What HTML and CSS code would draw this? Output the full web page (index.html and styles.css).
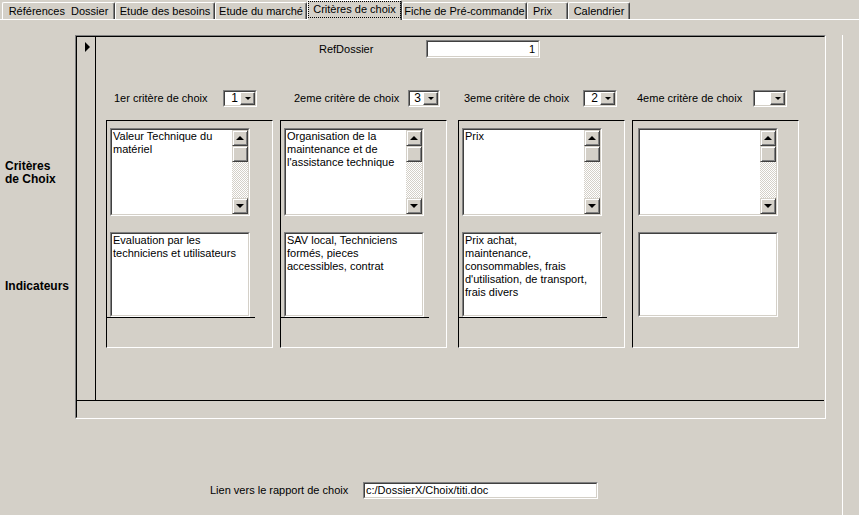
FILE: index.html
```html
<!DOCTYPE html>
<html lang="fr">
<head>
  <meta charset="UTF-8">
  <title>Critères de choix</title>
  <link rel="stylesheet" href="styles.css">
</head>
<body>

  <!-- onglets du formulaire -->
  <div class="tabs">
    <div class="tab t-ref">Références&nbsp; Dossier</div>
    <div class="tab t-besoins">Etude des besoins</div>
    <div class="tab t-marche">Etude du marché</div>
    <div class="tab tab-on t-crit"><span class="focus">Critères de choix</span></div>
    <div class="tab t-fiche">Fiche de Pré-commande</div>
    <div class="tab t-prix">Prix</div>
    <div class="tab t-cal">Calendrier</div>
  </div>

  <div class="page">
    <div class="main">
      <div class="side">
        <div class="side-crit">Critères<br>de Choix</div>
        <div class="side-ind">Indicateurs</div>
      </div>

      <!-- sous-formulaire des critères -->
      <div class="sf">
        <div class="sf-in">
          <div class="sf-detail">
            <div class="selector"><div class="rec-arrow"></div></div>
            <div class="detail">

              <div class="ref-row">
                <div class="ref-label">RefDossier</div>
                <div class="field ref-field"><div class="field-in num">1</div></div>
              </div>

              <div class="crit-row">
                <div class="crit c1">
                  <span>1er critère de choix</span>
                  <div class="combo"><div class="combo-in"><span class="val">1</span><span class="drop"><i></i></span></div></div>
                </div>
                <div class="crit c2">
                  <span>2eme critère de choix</span>
                  <div class="combo narrow"><div class="combo-in"><span class="val">3</span><span class="drop"><i></i></span></div></div>
                </div>
                <div class="crit c3">
                  <span>3eme critère de choix</span>
                  <div class="combo"><div class="combo-in"><span class="val">2</span><span class="drop"><i></i></span></div></div>
                </div>
                <div class="crit c4">
                  <span>4eme critère de choix</span>
                  <div class="combo"><div class="combo-in"><span class="val"></span><span class="drop"><i></i></span></div></div>
                </div>
              </div>

              <div class="panels">
                <div class="pnl p1">
                  <div class="field memo">
                    <div class="field-in memo-in">
                      <div class="txt">Valeur Technique du<br>matériel</div>
                      <div class="sb">
                        <div class="sb-btn up"><i></i></div>
                        <div class="sb-btn thumb"></div>
                        <div class="sb-track"></div>
                        <div class="sb-btn down"><i></i></div>
                      </div>
                    </div>
                  </div>
                  <div class="field memo2"><div class="field-in txt">Evaluation par les<br>techniciens et utilisateurs</div></div>
                  <div class="pnl-line"></div>
                </div>

                <div class="pnl p2">
                  <div class="field memo">
                    <div class="field-in memo-in">
                      <div class="txt">Organisation de la<br>maintenance et de<br>l'assistance technique</div>
                      <div class="sb">
                        <div class="sb-btn up"><i></i></div>
                        <div class="sb-btn thumb"></div>
                        <div class="sb-track"></div>
                        <div class="sb-btn down"><i></i></div>
                      </div>
                    </div>
                  </div>
                  <div class="field memo2"><div class="field-in txt">SAV local, Techniciens<br>formés, pieces<br>accessibles, contrat</div></div>
                  <div class="pnl-line"></div>
                </div>

                <div class="pnl p3">
                  <div class="field memo">
                    <div class="field-in memo-in">
                      <div class="txt">Prix</div>
                      <div class="sb">
                        <div class="sb-btn up"><i></i></div>
                        <div class="sb-btn thumb"></div>
                        <div class="sb-track"></div>
                        <div class="sb-btn down"><i></i></div>
                      </div>
                    </div>
                  </div>
                  <div class="field memo2"><div class="field-in txt">Prix achat,<br>maintenance,<br>consommables, frais<br>d'utilisation, de transport,<br>frais divers</div></div>
                  <div class="pnl-line"></div>
                </div>

                <div class="pnl p4">
                  <div class="field memo">
                    <div class="field-in memo-in">
                      <div class="txt"></div>
                      <div class="sb">
                        <div class="sb-btn up"><i></i></div>
                        <div class="sb-btn thumb"></div>
                        <div class="sb-track"></div>
                        <div class="sb-btn down"><i></i></div>
                      </div>
                    </div>
                  </div>
                  <div class="field memo2"><div class="field-in txt"></div></div>
                </div>
              </div>

            </div>
          </div>
          <div class="sf-foot"></div>
        </div>
      </div>
    </div>

    <div class="link-row">
      <div class="link-label">Lien vers le rapport de choix</div>
      <div class="field link-field"><div class="field-in">c:/DossierX/Choix/titi.doc</div></div>
    </div>
  </div>

</body>
</html>
```

FILE: styles.css
```css
* {
  box-sizing: border-box;
}

html, body {
  height: 100%;
}

body {
  margin: 0;
  background-color: #d4d0c8;
  color: #000;
  font-family: 'Liberation Sans', Arial, sans-serif;
  font-size: 11px;
  line-height: 13px;
  overflow: hidden;
}

/* onglets */
.tabs {
  display: flex;
  align-items: flex-start;
  height: 20px;
  border-bottom: 1px solid #fff;
  padding-left: 2px;
}

.tab {
  margin-top: 2px;
  height: 17px;
  padding-top: 2px;
  text-align: center;
  white-space: nowrap;
  border-left: 1px solid #fff;
  border-top: 1px solid #fff;
  border-right: 1px solid #404040;
  border-radius: 2px 2px 0 0;
  box-shadow: inset -1px 0 #808080;
}

.tab-on {
  margin-top: 0;
  height: 20px;
  margin-bottom: -1px;
  padding-top: 1px;
  background-color: #d4d0c8;
}

.focus {
  display: block;
  margin: 0 1px;
  padding: 1px 0;
  outline: 1px dotted #000;
}

.t-ref { width: 113px; }
.t-besoins { width: 100px; }
.t-marche { width: 92px; }
.t-crit { width: 95px; }
.t-fiche { width: 125px; }
.t-prix { width: 41px; text-align: left; padding-left: 5px; }
.t-cal { width: 62px; }

.page {
  width: 843px;
  height: calc(100% - 20px);
  border-right: 1px solid #fff;
}

.main {
  display: flex;
  margin-top: 15px;
}

.side {
  width: 75px;
  padding-left: 5px;
  font-size: 12px;
  font-weight: bold;
}

.side-crit {
  margin-top: 125px;
}

.side-ind {
  margin-top: 94px;
}

/* sous-formulaire */
.sf {
  width: 751px;
  height: 384px;
  border: 1px solid;
  border-color: #808080 #fff #fff #808080;
}

.sf-in {
  height: 100%;
  display: flex;
  flex-direction: column;
  border: 1px solid;
  border-color: #000 #d4d0c8 #d4d0c8 #000;
}

.sf-detail {
  display: flex;
  height: 364px;
  border-bottom: 1px solid #000;
}

.sf-foot {
  flex: 1;
}

.selector {
  width: 19px;
  border-right: 1px solid #000;
}

.rec-arrow {
  width: 0;
  height: 0;
  margin: 5px 0 0 8px;
  border-left: 5px solid #000;
  border-top: 5px solid transparent;
  border-bottom: 5px solid transparent;
}

.detail {
  flex: 1;
  display: flex;
  flex-direction: column;
}

/* champs en creux */
.field {
  border: 1px solid;
  border-color: #808080 #fff #fff #808080;
}

.field-in {
  height: 100%;
  background-color: #fff;
  border: 1px solid;
  border-color: #404040 #d4d0c8 #d4d0c8 #404040;
  padding: 0 1px;
  white-space: nowrap;
  overflow: hidden;
}

.num {
  text-align: right;
  padding-top: 1px;
  padding-right: 3px;
}

.ref-row {
  display: flex;
  align-items: center;
  margin: 3px 0 0 223px;
}

.ref-label {
  width: 107px;
}

.ref-field {
  width: 114px;
  height: 18px;
}

.crit-row {
  display: flex;
  margin-top: 32px;
  height: 17px;
}

.crit {
  display: flex;
  justify-content: space-between;
  align-items: center;
}

.c1 { margin-left: 18px; width: 143px; }
.c2 { margin-left: 37px; width: 146px; }
.c3 { margin-left: 24px; width: 153px; }
.c4 { margin-left: 20px; width: 150px; }

.combo {
  width: 34px;
  height: 17px;
  border: 1px solid;
  border-color: #808080 #fff #fff #808080;
}

.combo.narrow {
  width: 32px;
}

.combo-in {
  display: flex;
  height: 100%;
  background-color: #fff;
  border: 1px solid;
  border-color: #404040 #d4d0c8 #d4d0c8 #404040;
}

.val {
  flex: 1;
  text-align: right;
  padding-right: 2px;
  font-size: 12px;
}

.drop {
  width: 15px;
  display: flex;
  align-items: center;
  justify-content: center;
  background-color: #d4d0c8;
  border: 1px solid;
  border-color: #fff #404040 #404040 #fff;
  box-shadow: inset -1px -1px #808080;
}

.drop i,
.sb-btn.down i {
  width: 0;
  height: 0;
  border-top: 3px solid #000;
  border-left: 3px solid transparent;
  border-right: 3px solid transparent;
}

/* panneaux des critères */
.panels {
  display: flex;
  margin-top: 13px;
}

.pnl {
  width: 167px;
  height: 228px;
  border: 1px solid;
  border-color: #000 #fff #fff #000;
  padding-left: 3px;
}

.p1 { margin-left: 10px; }
.p2 { margin-left: 7px; }
.p3 { margin-left: 11px; }
.p4 { margin-left: 7px; padding-left: 5px; }

.memo {
  width: 140px;
  height: 88px;
  margin-top: 7px;
}

.memo-in {
  display: flex;
  padding: 0;
}

.txt {
  flex: 1;
  padding-left: 1px;
  white-space: nowrap;
}

.memo2 {
  width: 140px;
  height: 85px;
  margin-top: 16px;
}

.pnl-line {
  width: 148px;
  height: 1px;
  margin-left: -3px;
  background-color: #000;
}

/* barre de défilement */
.sb {
  width: 16px;
  display: flex;
  flex-direction: column;
}

.sb-btn {
  height: 16px;
  display: flex;
  align-items: center;
  justify-content: center;
  background-color: #d4d0c8;
  border: 1px solid;
  border-color: #d4d0c8 #404040 #404040 #d4d0c8;
  box-shadow: inset 1px 1px #fff, inset -1px -1px #808080;
}

.sb-btn.up i {
  width: 0;
  height: 0;
  border-bottom: 4px solid #000;
  border-left: 4px solid transparent;
  border-right: 4px solid transparent;
}

.sb-btn.down i {
  border-top-width: 4px;
  border-left-width: 4px;
  border-right-width: 4px;
}

.sb-track {
  flex: 1;
  background-image: repeating-conic-gradient(#fff 0 25%, #d4d0c8 0 50%);
  background-size: 2px 2px;
}

/* lien vers le rapport */
.link-row {
  display: flex;
  align-items: center;
  margin: 63px 0 0 210px;
}

.link-label {
  width: 153px;
}

.link-field {
  width: 235px;
  height: 17px;
}
```
